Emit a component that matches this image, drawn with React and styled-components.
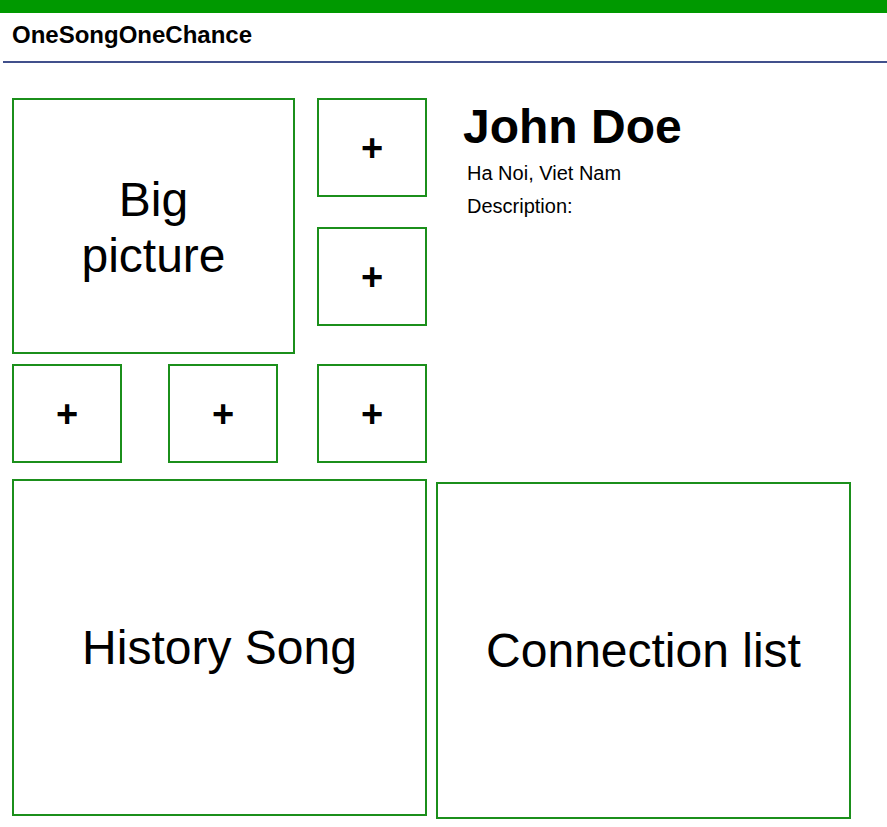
import React from "react";
import styled, { createGlobalStyle } from "styled-components";

const GlobalStyle = createGlobalStyle`
  body {
    margin: 0;
    background: #ffffff;
    font-family: "Liberation Sans", Arial, sans-serif;
    color: #000000;
  }
`;

const TopBar = styled.div`
  height: 13px;
  background: #009900;
`;

const Header = styled.div`
  height: 50px;
  margin-left: 3px;
  padding: 10px 0 0 9px;
  box-sizing: border-box;
  border-bottom: 2px solid #41508c;
`;

const Brand = styled.div`
  font-size: 24px;
  font-weight: 700;
  line-height: 24px;
`;

const Main = styled.div`
  display: grid;
  grid-template-columns: 415px 415px;
  column-gap: 9px;
  row-gap: 16px;
  padding: 35px 0 0 12px;
`;

const Tile = styled.div`
  box-sizing: border-box;
  width: ${(p) => p.w}px;
  height: ${(p) => p.h}px;
  border: 2px solid #1b8f1b;
  display: flex;
  align-items: center;
  justify-content: center;
  text-align: center;
  font-size: ${(p) => (p.plus ? 38 : 48)}px;
  font-weight: ${(p) => (p.plus ? 700 : 400)};
  line-height: 56px;
  margin-top: ${(p) => p.top || 0}px;
  padding-top: ${(p) => p.lift || 0}px;
`;

const Gallery = styled.div`
  display: flex;
  flex-direction: column;
  gap: 10px;
`;

const TopRow = styled.div`
  display: flex;
  gap: 22px;
`;

const SideStack = styled.div`
  display: flex;
  flex-direction: column;
  gap: 30px;
`;

const ThumbRow = styled.div`
  display: grid;
  grid-template-columns: 156px 149px 110px;
`;

const Info = styled.div`
  padding: 1px 0 0 27px;
`;

const Name = styled.h1`
  margin: 0 0 3px;
  font-size: 48px;
  font-weight: 700;
  line-height: 55px;
`;

const Detail = styled.p`
  margin: 0 0 0 4px;
  font-size: 20px;
  line-height: 33px;
`;

const Plus = () => <Tile w={110} h={99} plus>+</Tile>;

export default function App() {
  return (
    <>
      <GlobalStyle />
      <TopBar />
      <Header>
        <Brand>OneSongOneChance</Brand>
      </Header>
      <Main>
        <Gallery>
          <TopRow>
            <Tile w={283} h={256} lift={4}>
              Big
              <br />
              picture
            </Tile>
            <SideStack>
              <Plus />
              <Plus />
            </SideStack>
          </TopRow>
          <ThumbRow>
            <Plus />
            <Plus />
            <Plus />
          </ThumbRow>
        </Gallery>
        <Info>
          <Name>John Doe</Name>
          <Detail>Ha Noi, Viet Nam</Detail>
          <Detail>Description:</Detail>
        </Info>
        <Tile w={415} h={337}>History Song</Tile>
        <Tile w={415} h={337} top={3}>
          Connection list
        </Tile>
      </Main>
    </>
  );
}
